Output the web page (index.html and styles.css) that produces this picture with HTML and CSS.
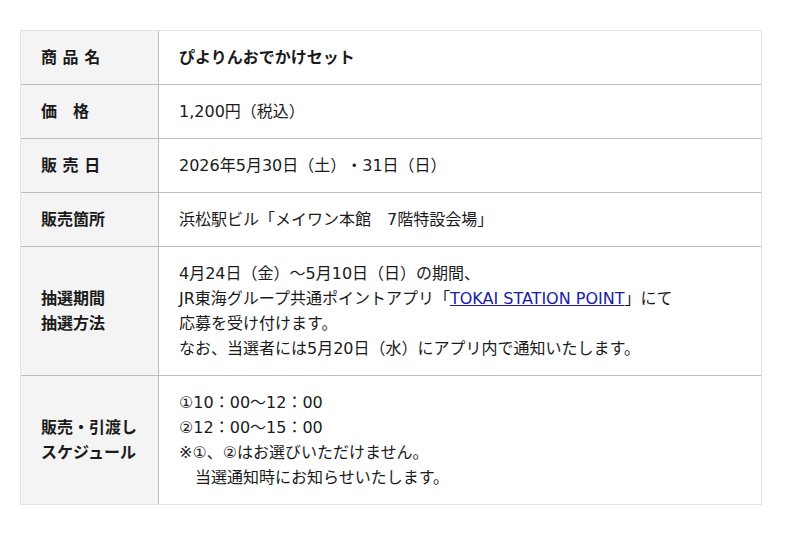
FILE: index.html
```html
<!DOCTYPE html>
<html lang="ja">
<head>
<meta charset="utf-8">
<title>ぴよりんおでかけセット</title>
<link rel="stylesheet" href="styles.css">
</head>
<body>
<table class="info">
  <tr>
    <th>商 品 名</th>
    <td class="name">ぴよりんおでかけセット</td>
  </tr>
  <tr>
    <th>価　格</th>
    <td>1,200円（税込）</td>
  </tr>
  <tr>
    <th>販 売 日</th>
    <td>2026年5月30日（土）・31日（日）</td>
  </tr>
  <tr>
    <th>販売箇所</th>
    <td>浜松駅ビル「メイワン本館　7階特設会場」</td>
  </tr>
  <tr>
    <th>抽選期間<br>抽選方法</th>
    <td>4月24日（金）～5月10日（日）の期間、<br>JR東海グループ共通ポイントアプリ「<a href="#" class="link">TOKAI STATION POINT</a>」にて<br>応募を受け付けます。<br>なお、当選者には5月20日（水）にアプリ内で通知いたします。</td>
  </tr>
  <tr>
    <th>販売・引渡し<br>スケジュール</th>
    <td>①10：00～12：00<br>②12：00～15：00<br>※①、②はお選びいただけません。<br>　当選通知時にお知らせいたします。</td>
  </tr>
</table>
</body>
</html>
```

FILE: styles.css
```css
html, body {
  margin: 0;
  padding: 0;
  background: #ffffff;
}
body {
  padding: 30px 20px;
  font-family: "DejaVu Sans", "Noto Sans CJK JP", sans-serif;
  font-size: 16px;
  line-height: 25px;
  color: #1a1a1a;
  text-spacing-trim: space-all;
}
.info {
  width: 742px;
  border-collapse: separate;
  border-spacing: 0;
  border: 1px solid #e4e4e4;
}
.info th,
.info td {
  padding: 14px 20px;
  vertical-align: middle;
  text-align: left;
  border-bottom: 1px solid #bdbdbd;
}
.info tr:last-child th,
.info tr:last-child td {
  border-bottom: none;
}
.info th {
  width: 97px;
  background: #f4f4f4;
  font-weight: bold;
  border-right: 1px solid #bdbdbd;
  white-space: nowrap;
}
.info td {
  font-weight: normal;
}
.info td.name {
  font-weight: bold;
}
.link {
  color: #1a1aa8;
  text-decoration: underline;
}
```
